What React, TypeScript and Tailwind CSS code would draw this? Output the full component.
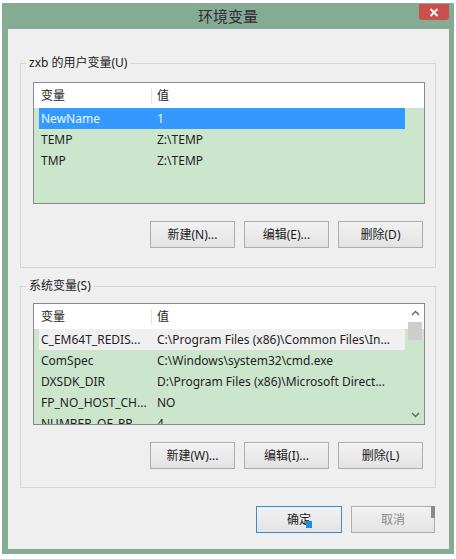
import React from "react";

const FONT = '"Noto Sans", "Noto Sans CJK SC", sans-serif';

type Row = { name: string; value: string; state?: "sel" | "inactive" };

function Btn({ label, primary, w = "w-[85px]" }: { label: React.ReactNode; primary?: boolean; w?: string }) {
  return (
    <div
      className={`${w} h-[27px] flex items-center justify-center text-[12px] text-[#1a1a1a] bg-gradient-to-b from-[#f2f2f2] to-[#e3e3e3] border ${
        primary ? "border-[#3c8bd0]" : "border-[#adadad]"
      } relative`}
    >
      {label}
    </div>
  );
}

function ListBox({ rows, scroll }: { rows: Row[]; scroll?: boolean }) {
  return (
    <div className="relative h-[122px] border border-[#8a8a8a] bg-[#cce6ce] overflow-hidden">
      <div className="h-[25px] bg-white flex items-center text-[12px] text-[#1e1e1e]">
        <div className="w-[117px] pl-[7px]">变量</div>
        <div className="w-px h-[16px] bg-[#e3e3e3]" />
        <div className="pl-[5px]">值</div>
      </div>
      {rows.map((r, i) => (
        <div
          key={i}
          className={`ml-[5px] mr-[19px] h-[21px] grid grid-cols-[118px_1fr] items-center text-[12px] whitespace-nowrap overflow-hidden ${
            r.state === "sel"
              ? "bg-[#3399ff] text-[#eef6ff]"
              : r.state === "inactive"
              ? "bg-[#f0f0f0] text-[#1e1e1e]"
              : "text-[#1e1e1e]"
          }`}
        >
          <div className="pl-[2px] overflow-hidden">{r.name}</div>
          <div className="overflow-hidden">{r.value}</div>
        </div>
      ))}
      {scroll && (
        <div className="absolute top-0 bottom-0 right-0 w-[18px] flex flex-col items-center">
          <div className="h-[18px] flex items-center justify-center">
            <svg width="9" height="6" viewBox="0 0 9 6">
              <path d="M1 5 L4.5 1.5 L8 5" fill="none" stroke="#606060" strokeWidth="1.3" />
            </svg>
          </div>
          <div className="w-[14px] h-[18px] bg-[#cdcdcd]" />
          <div className="flex-1" />
          <div className="h-[18px] flex items-center justify-center">
            <svg width="9" height="6" viewBox="0 0 9 6">
              <path d="M1 1 L4.5 4.5 L8 1" fill="none" stroke="#606060" strokeWidth="1.3" />
            </svg>
          </div>
        </div>
      )}
    </div>
  );
}

function Group({
  title,
  rows,
  scroll,
  buttons,
  pb,
}: {
  title: string;
  rows: Row[];
  scroll?: boolean;
  buttons: string[];
  pb: string;
}) {
  return (
    <fieldset className={`ml-[12px] w-[416px] border border-[#d6d6d6] pl-[12px] pr-[10px] ${pb}`}>
      <legend className="ml-[-7px] px-[3px] text-[12px] leading-[14px] text-[#1a1a1a]">{title}</legend>
      <div className={title.startsWith("zxb") ? "mt-[12px]" : "mt-[10px]"}>
        <ListBox rows={rows} scroll={scroll} />
      </div>
      <div className="mt-[17px] flex justify-end gap-[9px] pr-[2px]">
        {buttons.map((b) => (
          <Btn key={b} label={b} />
        ))}
      </div>
    </fieldset>
  );
}

export default function App() {
  return (
    <div className="w-[456px] h-[559px] bg-white pt-[3px] pl-[2px]" style={{ fontFamily: FONT }}>
      <div className="relative w-[452px] bg-[#86ab94] pb-[5px]">
        <div className="h-[26px] flex items-center justify-center text-[15px] text-[#2e2e2e]">环境变量</div>
        <div className="absolute top-[1px] right-[5px] w-[30px] h-[16px] bg-[#c9504c] rounded-b-[3px] flex items-center justify-center">
          <svg width="10" height="9" viewBox="0 0 10 9">
            <path d="M1.5 1 L8.5 8 M8.5 1 L1.5 8" stroke="white" strokeWidth="1.8" />
          </svg>
        </div>
        <div className="ml-[6px] w-[441px] h-[520px] bg-[#efefef] pt-[27px]">
          <Group
            title="zxb 的用户变量(U)"
            rows={[
              { name: "NewName", value: "1", state: "sel" },
              { name: "TEMP", value: "Z:\\TEMP" },
              { name: "TMP", value: "Z:\\TEMP" },
            ]}
            buttons={["新建(N)...", "编辑(E)...", "删除(D)"]}
            pb="pb-[19px]"
          />
          <div className="h-[11px]" />
          <Group
            title="系统变量(S)"
            scroll
            rows={[
              { name: "C_EM64T_REDIS...", value: "C:\\Program Files (x86)\\Common Files\\In...", state: "inactive" },
              { name: "ComSpec", value: "C:\\Windows\\system32\\cmd.exe" },
              { name: "DXSDK_DIR", value: "D:\\Program Files (x86)\\Microsoft Direct..." },
              { name: "FP_NO_HOST_CH...", value: "NO" },
              { name: "NUMBER_OF_PR...", value: "4" },
            ]}
            buttons={["新建(W)...", "编辑(I)...", "删除(L)"]}
            pb="pb-[18px]"
          />
          <div className="mt-[18px] flex justify-end gap-[9px] pr-[14px]">
            <Btn
              primary
              w="w-[86px]"
              label={
                <span className="relative">
                  确定
                  <span className="absolute right-[-1px] bottom-[1px] w-[6px] h-[7px] bg-[#1c8ee0]" />
                </span>
              }
            />
            <div className="relative">
              <Btn w="w-[84px]" label={<span className="text-[#8a8a8a]">取消</span>} />
              <div className="absolute top-0 right-0 w-[4px] h-[12px] bg-[#8c8c8c]" />
            </div>
          </div>
        </div>
      </div>
    </div>
  );
}
